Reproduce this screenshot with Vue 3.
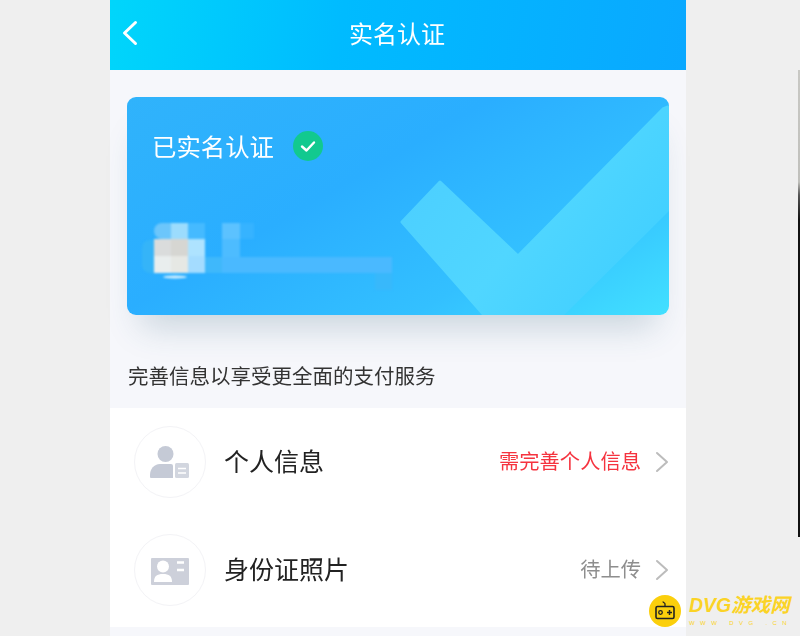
<template>
  <div class="screen">
    <div class="phone">
      <header class="topbar">
        <span class="back">
          <svg width="18" height="28" viewBox="0 0 18 28">
            <path d="M14.5 3.5 L3.5 14 L14.5 24.5" fill="none" stroke="#fff" stroke-width="3" stroke-linecap="round" stroke-linejoin="round" />
          </svg>
        </span>
        <h1>实名认证</h1>
        <span></span>
      </header>

      <section class="card">
        <svg class="card-art" width="542" height="218" viewBox="0 0 542 218">
          <defs>
            <linearGradient id="tick" x1="0" y1="0" x2="1" y2="0.6">
              <stop offset="0" stop-color="#4accff" />
              <stop offset="0.6" stop-color="#50d6ff" />
              <stop offset="1" stop-color="#42d0ff" />
            </linearGradient>
          </defs>
          <polygon
            points="313,85 391,159 536,12 541,10 541,113 435,218 357,218 275,125"
            fill="url(#tick)"
            stroke="url(#tick)"
            stroke-width="3"
            stroke-linejoin="round"
          />
          <g class="mosaic">
            <rect x="15" y="143" width="20" height="33" rx="8" fill="#35b4f8" />
            <ellipse cx="48" cy="180" rx="12" ry="1.5" fill="#d8f2ff" />
            <rect
              v-for="(c, i) in mosaic"
              :key="i"
              :x="c[0]"
              :y="c[1]"
              :width="c[2]"
              :height="c[3]"
              :rx="c[5] || 0"
              :fill="c[4]"
            />
          </g>
        </svg>
        <div class="card-head">
          <span>已实名认证</span>
          <svg width="30" height="30" viewBox="0 0 30 30">
            <circle cx="15" cy="15" r="15" fill="#12c98f" />
            <path d="M9 15.5 L13.5 19.5 L21 11.5" fill="none" stroke="#fff" stroke-width="2.4" stroke-linecap="round" stroke-linejoin="round" />
          </svg>
        </div>
      </section>

      <p class="hint">完善信息以享受更全面的支付服务</p>

      <div class="list">
        <div v-for="row in rows" :key="row.title" class="row">
          <span class="avatar">
            <svg v-if="row.icon === 'person'" width="40" height="32" viewBox="0 0 40 32">
              <circle cx="15.5" cy="8" r="8" fill="#c5cad6" />
              <path d="M0 31 V29 C0 23 4 18 10 18 H21 Q23 18 23 20 V32 H1 Q0 32 0 31 Z" fill="#c5cad6" />
              <rect x="25" y="17" width="14" height="15" rx="1.5" fill="#d2d6df" />
              <path d="M28 22.5 H36 M28 27 H36" stroke="#fff" stroke-width="1.4" />
            </svg>
            <svg v-else width="38" height="30" viewBox="0 0 38 30">
              <rect y="3" width="38" height="27" rx="1" fill="#cdd0da" />
              <circle cx="12" cy="11.5" r="6" fill="#fff" />
              <path d="M3 27 C3 21 6 19 12 19 C18 19 21 21 21 27 Z" fill="#fff" />
              <path d="M26 7.5 H33 M26 15 H33" stroke="#fff" stroke-width="2.4" />
            </svg>
          </span>
          <span class="row-title">{{ row.title }}</span>
          <span class="row-status" :class="{ warn: row.warn }">{{ row.status }}</span>
          <svg class="chev" width="14" height="22" viewBox="0 0 14 22">
            <path d="M2 2 L12 11 L2 20" fill="none" stroke="#bcbcbc" stroke-width="2" stroke-linecap="round" stroke-linejoin="round" />
          </svg>
        </div>
      </div>
    </div>

    <div class="edge"></div>

    <div class="mark">
      <svg width="32" height="32" viewBox="0 0 32 32">
        <circle cx="16" cy="16" r="16" fill="#fbcf0c" />
        <rect x="7" y="11.5" width="18" height="12" rx="1.5" fill="none" stroke="#222" stroke-width="1.6" />
        <path d="M16 11.5 V9 C16 7.5 14 8 14 6.5" fill="none" stroke="#222" stroke-width="1.3" />
        <circle cx="11.5" cy="17.5" r="1.8" fill="none" stroke="#222" stroke-width="1.3" />
        <path d="M18 17.5 H23 M20.5 15 V20" stroke="#222" stroke-width="1.5" />
      </svg>
      <div class="mark-text">
        <strong>DVG游戏网</strong>
        <small>WWW DVG .CN</small>
      </div>
    </div>
  </div>
</template>

<script setup>
const rows = [
  { title: '个人信息', status: '需完善个人信息', warn: true, icon: 'person' },
  { title: '身份证照片', status: '待上传', warn: false, icon: 'card' },
]

// blurred-out name, as blocks in card coordinates: x, y, w, h, colour, radius
const mosaic = [
  [27, 126, 17, 16, '#6cc6fb', 8],
  [35, 126, 9, 16, '#6cc6fb'],
  [44, 126, 17, 16, '#9cdcfd'],
  [61, 126, 17, 16, '#45baff'],
  [95, 126, 18, 16, '#5cc2ff'],
  [113, 126, 14, 16, '#36b3ff'],
  [95, 142, 18, 18, '#4dbcff'],
  [27, 142, 17, 17, '#dadcdc'],
  [44, 142, 17, 17, '#d6d6d2'],
  [61, 142, 17, 17, '#aee3ff'],
  [27, 159, 17, 17, '#e9eeee'],
  [44, 159, 17, 17, '#e6e8e4'],
  [61, 159, 17, 17, '#a4dcff'],
  [78, 160, 17, 16, '#3fb8fb'],
  [95, 160, 170, 16, '#4ab9ff'],
  [248, 176, 17, 17, '#38b8fb'],
]
</script>

<style>
html, body { background: #efefef; }
</style>

<style scoped>
.screen {
  position: relative;
  width: 800px;
  height: 636px;
  overflow: hidden;
  background: #efefef;
  font-family: "Noto Sans CJK SC", "Noto Sans", sans-serif;
}

.phone {
  width: 576px;
  height: 636px;
  margin-left: 110px;
  background: #f6f7fb;
  filter: blur(0.4px);
}

.topbar {
  display: grid;
  grid-template-columns: 1fr auto 1fr;
  align-items: center;
  height: 70px;
  padding: 0 13px 4px 11px;
  box-sizing: border-box;
  background: linear-gradient(100deg, #00d6fb 0%, #00bbff 40%, #0aa8ff 100%);
  color: #fff;
}

.back { display: flex; }

h1 {
  margin: 0;
  font-size: 24px;
  font-weight: 400;
  line-height: 30px;
}

.card {
  position: relative;
  height: 218px;
  margin: 27px 17px 0;
  border-radius: 9px;
  overflow: hidden;
  background: linear-gradient(150deg, #30b3fb 0%, #2aaeff 40%, #33c0ff 72%, #42e0ff 100%);
  box-shadow: 0 26px 32px -14px rgba(40, 90, 120, 0.22);
}

.card-art {
  position: absolute;
  left: 0;
  top: 0;
}

.mosaic { filter: blur(0.8px); }

.card-head {
  position: relative;
  display: flex;
  align-items: center;
  gap: 19px;
  padding: 34px 0 0 25px;
  color: #fff;
  font-size: 24.4px;
  line-height: 30px;
}

.hint {
  margin: 0;
  padding: 45px 0 18px 18px;
  color: #333;
  font-size: 20.5px;
  line-height: 30px;
  white-space: nowrap;
}

.list {
  background: #fff;
  padding-bottom: 3px;
}

.row {
  display: flex;
  align-items: center;
  height: 108px;
  padding: 0 17px 0 24px;
  box-sizing: border-box;
}

.avatar {
  display: flex;
  align-items: center;
  justify-content: center;
  width: 72px;
  height: 72px;
  box-sizing: border-box;
  border: 1px solid #f3f3f6;
  border-radius: 50%;
}

.row-title {
  margin: 0 0 5px 18px;
  color: #222;
  font-size: 25px;
  line-height: 34px;
}

.row-status {
  margin: 0 0 4px auto;
  color: #8e8e8e;
  font-size: 20.3px;
  line-height: 30px;
}

.row-status.warn { color: #f5333f; }

.chev { margin-left: 14px; }

.edge {
  position: absolute;
  top: 70px;
  right: 0;
  width: 2px;
  height: 467px;
  background: linear-gradient(#c8c8c4 0, #c0c0bc 112px, #555 125px, #111 150px, #111 100%);
}

.mark {
  position: absolute;
  left: 649px;
  top: 595px;
  display: flex;
  align-items: center;
  gap: 8px;
}

.mark-text {
  display: flex;
  flex-direction: column;
  gap: 4px;
  color: #fbd326;
}

.mark-text strong {
  font-family: "Liberation Sans", "Noto Sans CJK SC", sans-serif;
  font-size: 19.5px;
  font-style: italic;
  font-weight: 700;
  line-height: 20px;
  white-space: nowrap;
}

.mark-text small {
  font-family: "Liberation Sans", sans-serif;
  font-size: 6px;
  line-height: 8px;
  letter-spacing: 5.4px;
  white-space: nowrap;
}
</style>
